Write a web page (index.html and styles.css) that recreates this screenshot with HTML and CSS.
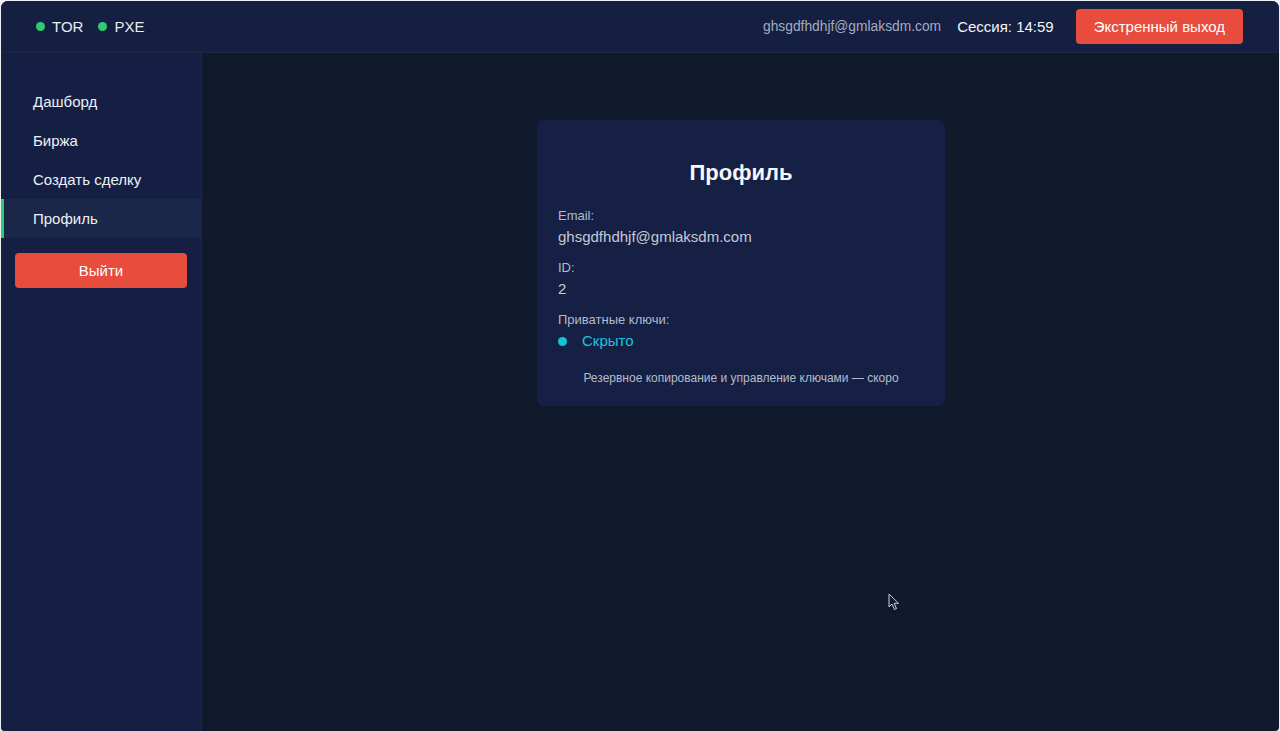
FILE: index.html
```html
<!DOCTYPE html>
<html lang="ru">
<head>
<meta charset="utf-8">
<title>Профиль</title>
<link rel="stylesheet" href="styles.css">
</head>
<body>
<div class="app">
  <header class="topbar">
    <div class="status">
      <span class="status-item"><span class="dot green"></span>TOR</span>
      <span class="status-item"><span class="dot green"></span>PXE</span>
    </div>
    <div class="top-right">
      <span class="user-email">ghsgdfhdhjf@gmlaksdm.com</span>
      <span class="session">Сессия: 14:59</span>
      <button class="btn-danger btn-emergency">Экстренный выход</button>
    </div>
  </header>
  <div class="body">
    <aside class="sidebar">
      <nav class="nav">
        <a class="nav-item">Дашборд</a>
        <a class="nav-item">Биржа</a>
        <a class="nav-item">Создать сделку</a>
        <a class="nav-item active">Профиль</a>
      </nav>
      <button class="btn-danger btn-logout">Выйти</button>
    </aside>
    <main class="main">
      <section class="card">
        <h2 class="card-title">Профиль</h2>
        <div class="field">
          <div class="label">Email:</div>
          <div class="value">ghsgdfhdhjf@gmlaksdm.com</div>
        </div>
        <div class="field">
          <div class="label">ID:</div>
          <div class="value">2</div>
        </div>
        <div class="field">
          <div class="label">Приватные ключи:</div>
          <div class="value keys"><span class="dot cyan"></span>Скрыто</div>
        </div>
        <p class="note">Резервное копирование и управление ключами — скоро</p>
      </section>
      <svg class="cursor" width="12" height="18" viewBox="0 0 12 18"><path d="M1 1 L1 14 L4 11 L6.5 16.5 L8.5 15.6 L6.2 10.3 L10.5 10.3 Z" fill="#151c30" stroke="#c9ced8" stroke-width="1" stroke-linejoin="round"/></svg>
    </main>
  </div>
</div>
</body>
</html>
```
FILE: styles.css
```css
* { box-sizing: border-box; }
html, body { margin: 0; height: 100%; }
body {
  background: #eef0f4;
  font-family: "Liberation Sans", Arial, sans-serif;
  padding: 1px 1px 0 1px;
}
.app {
  height: 100%;
  display: flex;
  flex-direction: column;
  border-radius: 7px 7px 4px 4px;
  overflow: hidden;
  background: #111a2d;
}
.topbar {
  height: 52px;
  flex: none;
  background: #151f42;
  border-bottom: 1px solid #1d2849;
  display: flex;
  align-items: center;
  justify-content: space-between;
  padding: 0 36px 0 35px;
}
.status { display: flex; gap: 15px; }
.status-item {
  display: flex;
  align-items: center;
  gap: 7px;
  color: #e8ebf2;
  font-size: 15px;
}
.dot {
  display: inline-block;
  width: 9px;
  height: 9px;
  border-radius: 50%;
}
.dot.green { background: #2ecc71; }
.dot.cyan { background: #14c2dc; }
.top-right { display: flex; align-items: center; }
.user-email { color: #a4acbf; font-size: 13.8px; margin-right: 16px; }
.session { color: #f2f4f8; font-size: 15px; margin-right: 22px; }
.btn-danger {
  background: #e74c3c;
  color: #fff;
  border: none;
  border-radius: 4px;
  font-family: inherit;
  font-size: 15px;
  cursor: pointer;
}
.btn-emergency { height: 35px; padding: 0 18px; }
.body { flex: 1; display: flex; min-height: 0; }
.sidebar {
  width: 201px;
  flex: none;
  background: #151f44;
  border-right: 1px solid #1b2545;
  padding-top: 29px;
}
.nav { display: flex; flex-direction: column; }
.nav-item {
  height: 39px;
  display: flex;
  align-items: center;
  padding-left: 29px;
  border-left: 3px solid transparent;
  color: #eef0f5;
  font-size: 15px;
}
.nav-item.active {
  background: #1b2749;
  border-left-color: #2ecc71;
}
.btn-logout {
  display: block;
  width: 172px;
  height: 35px;
  margin: 15px 0 0 14px;
}
.main {
  flex: 1;
  position: relative;
  display: flex;
  justify-content: center;
  align-items: flex-start;
  padding: 67px 0 0 1px;
}
.card {
  width: 408px;
  background: #162045;
  border-radius: 7px;
  padding: 39px 21px 20px;
}
.card-title {
  margin: 0 0 20px;
  text-align: center;
  color: #f6f7fa;
  font-size: 22px;
  line-height: 28px;
  font-weight: bold;
}
.field { margin-bottom: 12px; }
.label {
  color: #b3bacb;
  font-size: 13px;
  line-height: 18px;
  margin-bottom: 2px;
}
.value {
  color: #c5cad6;
  font-size: 15px;
  line-height: 20px;
}
.value.keys {
  display: flex;
  align-items: center;
  gap: 15px;
  color: #1cc3df;
}
.note {
  margin: 19px 0 0;
  text-align: center;
  color: #b5bccb;
  font-size: 12px;
  line-height: 16px;
}
.cursor {
  position: absolute;
  left: 686px;
  top: 540px;
}
```
